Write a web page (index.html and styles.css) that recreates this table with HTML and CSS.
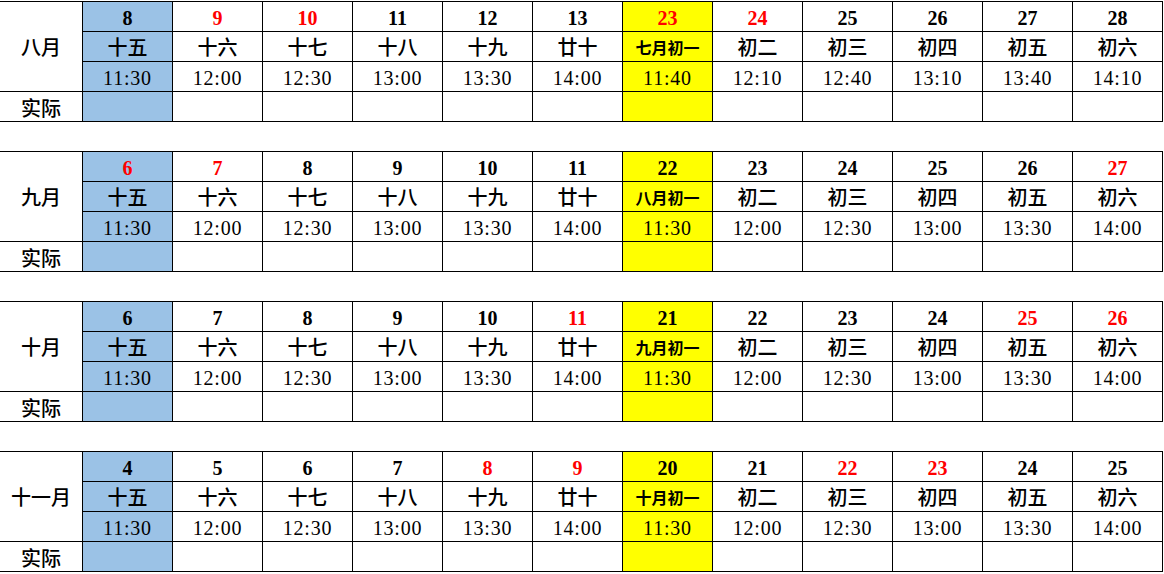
FILE: index.html
```html
<!DOCTYPE html>
<html lang="zh">
<head>
<meta charset="utf-8">
<link rel="stylesheet" href="styles.css">
</head>
<body>
<div class="sheet">

<table class="block">
<colgroup><col class="c-m"><col span="12" class="c-d"></colgroup>
<tr class="r-day">
<td class="month" rowspan="3">八月</td>
<td class="blue">8</td><td class="red">9</td><td class="red">10</td><td>11</td><td>12</td><td>13</td><td class="yellow red">23</td><td class="red">24</td><td>25</td><td>26</td><td>27</td><td>28</td>
</tr>
<tr class="r-lunar">
<td class="blue">十五</td><td>十六</td><td>十七</td><td>十八</td><td>十九</td><td>廿十</td><td class="yellow small">七月初一</td><td>初二</td><td>初三</td><td>初四</td><td>初五</td><td>初六</td>
</tr>
<tr class="r-time">
<td class="blue">11:30</td><td>12:00</td><td>12:30</td><td>13:00</td><td>13:30</td><td>14:00</td><td class="yellow">11:40</td><td>12:10</td><td>12:40</td><td>13:10</td><td>13:40</td><td>14:10</td>
</tr>
<tr class="r-real">
<td class="label">实际</td>
<td class="blue"></td><td></td><td></td><td></td><td></td><td></td><td class="yellow"></td><td></td><td></td><td></td><td></td><td></td>
</tr>
</table>

<table class="block">
<colgroup><col class="c-m"><col span="12" class="c-d"></colgroup>
<tr class="r-day">
<td class="month" rowspan="3">九月</td>
<td class="blue red">6</td><td class="red">7</td><td>8</td><td>9</td><td>10</td><td>11</td><td class="yellow">22</td><td>23</td><td>24</td><td>25</td><td>26</td><td class="red">27</td>
</tr>
<tr class="r-lunar">
<td class="blue">十五</td><td>十六</td><td>十七</td><td>十八</td><td>十九</td><td>廿十</td><td class="yellow small">八月初一</td><td>初二</td><td>初三</td><td>初四</td><td>初五</td><td>初六</td>
</tr>
<tr class="r-time">
<td class="blue">11:30</td><td>12:00</td><td>12:30</td><td>13:00</td><td>13:30</td><td>14:00</td><td class="yellow">11:30</td><td>12:00</td><td>12:30</td><td>13:00</td><td>13:30</td><td>14:00</td>
</tr>
<tr class="r-real">
<td class="label">实际</td>
<td class="blue"></td><td></td><td></td><td></td><td></td><td></td><td class="yellow"></td><td></td><td></td><td></td><td></td><td></td>
</tr>
</table>

<table class="block">
<colgroup><col class="c-m"><col span="12" class="c-d"></colgroup>
<tr class="r-day">
<td class="month" rowspan="3">十月</td>
<td class="blue">6</td><td>7</td><td>8</td><td>9</td><td>10</td><td class="red">11</td><td class="yellow">21</td><td>22</td><td>23</td><td>24</td><td class="red">25</td><td class="red">26</td>
</tr>
<tr class="r-lunar">
<td class="blue">十五</td><td>十六</td><td>十七</td><td>十八</td><td>十九</td><td>廿十</td><td class="yellow small">九月初一</td><td>初二</td><td>初三</td><td>初四</td><td>初五</td><td>初六</td>
</tr>
<tr class="r-time">
<td class="blue">11:30</td><td>12:00</td><td>12:30</td><td>13:00</td><td>13:30</td><td>14:00</td><td class="yellow">11:30</td><td>12:00</td><td>12:30</td><td>13:00</td><td>13:30</td><td>14:00</td>
</tr>
<tr class="r-real">
<td class="label">实际</td>
<td class="blue"></td><td></td><td></td><td></td><td></td><td></td><td class="yellow"></td><td></td><td></td><td></td><td></td><td></td>
</tr>
</table>

<table class="block">
<colgroup><col class="c-m"><col span="12" class="c-d"></colgroup>
<tr class="r-day">
<td class="month" rowspan="3">十一月</td>
<td class="blue">4</td><td>5</td><td>6</td><td>7</td><td class="red">8</td><td class="red">9</td><td class="yellow">20</td><td>21</td><td class="red">22</td><td class="red">23</td><td>24</td><td>25</td>
</tr>
<tr class="r-lunar">
<td class="blue">十五</td><td>十六</td><td>十七</td><td>十八</td><td>十九</td><td>廿十</td><td class="yellow small">十月初一</td><td>初二</td><td>初三</td><td>初四</td><td>初五</td><td>初六</td>
</tr>
<tr class="r-time">
<td class="blue">11:30</td><td>12:00</td><td>12:30</td><td>13:00</td><td>13:30</td><td>14:00</td><td class="yellow">11:30</td><td>12:00</td><td>12:30</td><td>13:00</td><td>13:30</td><td>14:00</td>
</tr>
<tr class="r-real">
<td class="label">实际</td>
<td class="blue"></td><td></td><td></td><td></td><td></td><td></td><td class="yellow"></td><td></td><td></td><td></td><td></td><td></td>
</tr>
</table>

</div>
</body>
</html>
```

FILE: styles.css
```css
html, body {
  margin: 0;
  padding: 0;
  background: #ffffff;
}

.sheet {
  margin-left: -1px;
  padding-top: 1px;
  display: flex;
  flex-direction: column;
  gap: 29px;
}

.block {
  border-collapse: collapse;
  table-layout: fixed;
  width: 1164px;
  color: #000;
}

.c-m { width: 83px; }
.c-d { width: 90px; }

.block tr { height: 30px; }

.block td {
  border: 1px solid #000;
  height: 26px;
  padding: 3px 0 0 0;
  text-align: center;
  vertical-align: middle;
  line-height: 20px;
  overflow: hidden;
  white-space: nowrap;
}

.r-day td {
  font-family: "Liberation Serif", serif;
  font-weight: 700;
  font-size: 20px;
}

.r-lunar td {
  font-family: "Noto Sans CJK SC", sans-serif;
  font-weight: 500;
  font-size: 20px;
  padding-top: 1px;
  height: 28px;
}

.r-lunar td.small {
  font-size: 16px;
  font-weight: 700;
}

.r-time td {
  font-family: "Liberation Serif", serif;
  font-size: 20px;
  letter-spacing: 0.8px;
}

.block td.month {
  font-family: "Noto Sans CJK SC", sans-serif;
  font-weight: 500;
  font-size: 20px;
  padding-top: 0;
  height: auto;
  color: #000;
}

.block td.label {
  font-family: "Noto Sans CJK SC", sans-serif;
  font-weight: 500;
  font-size: 20px;
}

.block td.blue { background: #9bc2e6; }
.block td.yellow { background: #ffff00; }
.block td.red { color: #ff0000; }
```
